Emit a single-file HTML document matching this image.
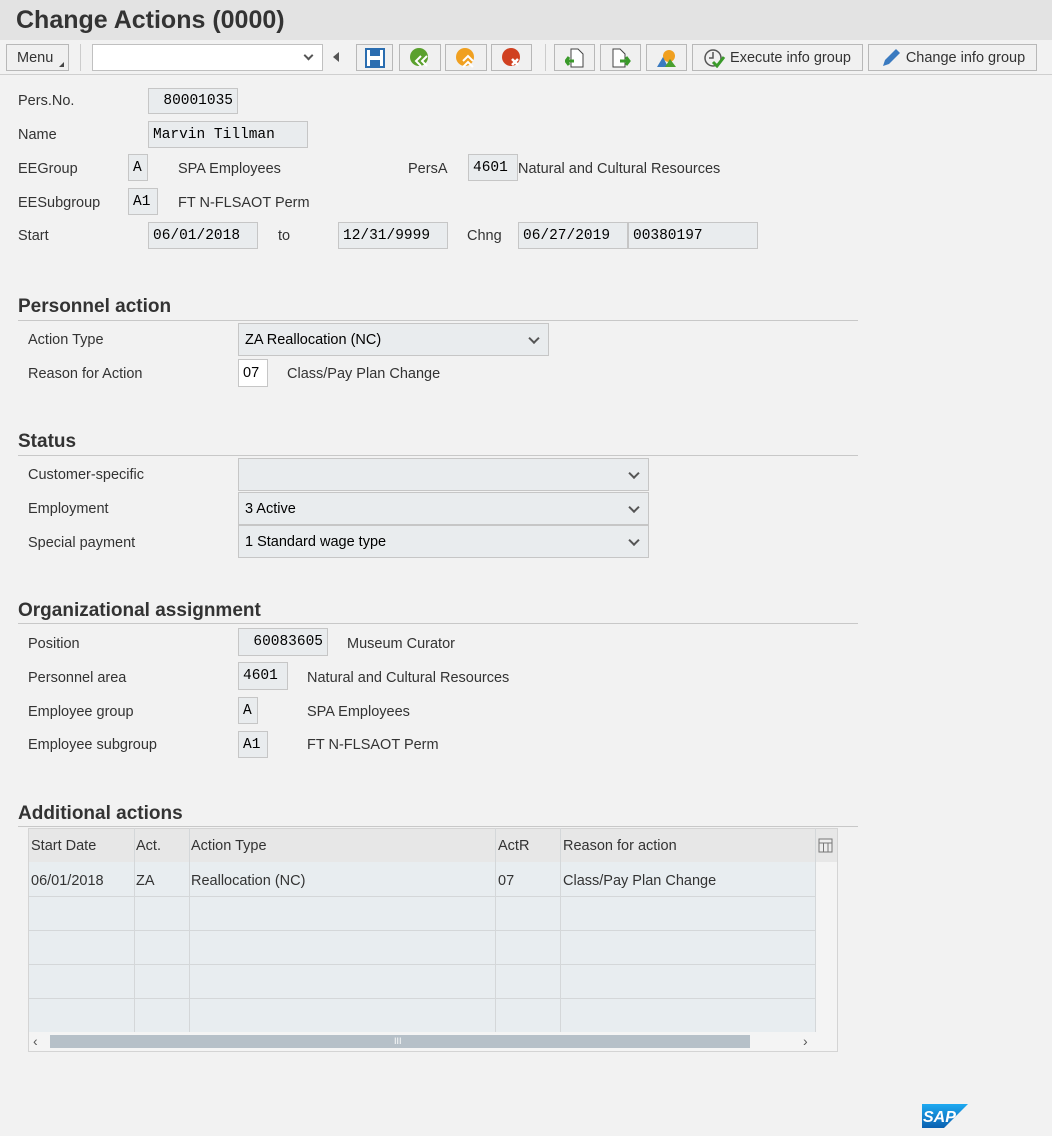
<!DOCTYPE html>
<html><head><meta charset="utf-8"><style>
*{box-sizing:border-box;margin:0;padding:0}
body{width:1052px;height:1136px;background:#f2f2f2;font-family:"Liberation Sans",Arial,sans-serif;color:#333;position:relative;overflow:hidden;font-size:14px}
.a{position:absolute}
.t{position:absolute;white-space:nowrap;font-size:14.5px;color:#333;line-height:16px}
.in{position:absolute;background:#e9ecee;border:1px solid #c6c6c6;font-family:"Liberation Mono",monospace;font-size:14.5px;color:#000;padding:0 4px;height:26px;display:flex;align-items:center;white-space:nowrap}
.dd{position:absolute;background:#e9ecee;border:1px solid #c6c6c6;font-size:14.5px;color:#000;padding:0 6px;white-space:nowrap;display:flex;align-items:center}
.dd:after{content:"";position:absolute;right:10px;top:50%;width:6px;height:6px;border-right:2px solid #555;border-bottom:2px solid #555;transform:translateY(-70%) rotate(45deg)}
.h{position:absolute;font-weight:bold;font-size:19px;color:#333;left:18px}
.ln{position:absolute;left:18px;width:840px;height:1px;background:#c8c8c8}
.btn{position:absolute;top:44px;height:27px;background:#f0f0f0;border:1px solid #b8b8b8;display:flex;align-items:center;justify-content:center;font-size:14.5px;color:#333}
.col{position:absolute;top:828px;height:204px;width:1px;background:#d4d7d9}
.row{position:absolute;left:29px;width:786px;height:1px;background:#d4d7d9}
</style></head><body>
<div class="a" style="left:0;top:0;width:1052px;height:40px;background:#e3e3e3"></div>
<div class="a" style="left:16px;top:6px;font-size:25px;font-weight:bold;color:#333">Change Actions (0000)</div>
<div class="a" style="left:0;top:74px;width:1052px;height:1px;background:#cfcfcf"></div>
<div class="btn" style="left:6px;width:63px;justify-content:flex-start;padding-left:10px">Menu<span style="position:absolute;right:4px;bottom:3px;width:0;height:0;border-left:5px solid transparent;border-bottom:5px solid #444"></span></div>
<div class="a" style="left:80px;top:44px;width:1px;height:27px;background:#ccc"></div>
<div class="a" style="left:92px;top:44px;width:231px;height:27px;background:#fff;border:1px solid #c0c0c0"></div>
<div class="a" style="left:305px;top:52px;width:7px;height:7px;border-right:2px solid #555;border-bottom:2px solid #555;transform:rotate(45deg)"></div>
<div class="a" style="left:333px;top:52px;width:0;height:0;border-top:5px solid transparent;border-bottom:5px solid transparent;border-right:6px solid #555"></div>
<div class="btn" style="left:356px;width:37px"><svg width="20" height="20"><rect x="1" y="1" width="18" height="18" fill="#fff" stroke="#2a6db0" stroke-width="2"/><rect x="5" y="2" width="10" height="6" fill="#2a6db0"/><rect x="5" y="12" width="10" height="6" fill="#2a6db0"/></svg></div>
<div class="btn" style="left:399px;width:42px"><svg width="22" height="22"><circle cx="10" cy="10" r="9" fill="#5aa02c"/><path d="M12 9l-5 5 5 5M18 9l-5 5 5 5" stroke="#fff" stroke-width="2" fill="none"/></svg></div>
<div class="btn" style="left:445px;width:42px"><svg width="22" height="22"><circle cx="10" cy="10" r="9" fill="#f0a020"/><path d="M8 14l5-5 5 5M8 20l5-5 5 5" stroke="#fff" stroke-width="2" fill="none"/></svg></div>
<div class="btn" style="left:491px;width:41px"><svg width="22" height="22"><circle cx="10" cy="10" r="9" fill="#d04020"/><path d="M11 12l6 6M17 12l-6 6" stroke="#fff" stroke-width="2.5"/></svg></div>
<div class="a" style="left:545px;top:44px;width:1px;height:27px;background:#ccc"></div>
<div class="btn" style="left:554px;width:41px"><svg width="20" height="20"><path d="M6 1h7l5 5v13H6z" fill="#fff" stroke="#444"/><path d="M1 13h8M4 9l-3 4 3 4" stroke="#3a9a2a" stroke-width="3" fill="none"/></svg></div>
<div class="btn" style="left:600px;width:41px"><svg width="20" height="20"><path d="M2 1h7l5 5v13H2z" fill="#fff" stroke="#444"/><path d="M9 13h9M15 9l3 4-3 4" stroke="#3a9a2a" stroke-width="3" fill="none"/></svg></div>
<div class="btn" style="left:646px;width:41px"><svg width="22" height="20"><circle cx="13" cy="8" r="6" fill="#f0a020"/><path d="M1 19l6-10 5 10z" fill="#3a7ac0"/><path d="M9 19l5-8 6 8z" fill="#4aa030"/></svg></div>
<div class="btn" style="left:692px;width:171px"><svg width="22" height="20" style="margin-right:4px"><circle cx="9" cy="10" r="8" fill="none" stroke="#555" stroke-width="1.5"/><path d="M9 4v6h-4" stroke="#555" stroke-width="1.5" fill="none"/><path d="M9 14l4 4 7-9" stroke="#3a9a2a" stroke-width="3" fill="none"/></svg>Execute info group</div>
<div class="btn" style="left:868px;width:169px"><svg width="22" height="20" style="margin-right:4px"><path d="M3 18l2-6 11-11 4 4-11 11z" fill="#3a7ac0"/></svg>Change info group</div>

<div class="t" style="left:18px;top:93px">Pers.No.</div><div class="in" style="left:148px;top:88px;width:90px;justify-content:flex-end">80001035</div>
<div class="t" style="left:18px;top:127px">Name</div><div class="in" style="left:148px;top:121px;width:160px;height:27px">Marvin Tillman</div>
<div class="t" style="left:18px;top:161px">EEGroup</div><div class="in" style="left:128px;top:154px;width:20px;height:27px">A</div><div class="t" style="left:178px;top:161px">SPA Employees</div>
<div class="t" style="left:408px;top:161px">PersA</div><div class="in" style="left:468px;top:154px;width:50px;height:27px">4601</div><div class="t" style="left:518px;top:161px">Natural and Cultural Resources</div>
<div class="t" style="left:18px;top:195px">EESubgroup</div><div class="in" style="left:128px;top:188px;width:30px;height:27px">A1</div><div class="t" style="left:178px;top:195px">FT N-FLSAOT Perm</div>
<div class="t" style="left:18px;top:228px">Start</div><div class="in" style="left:148px;top:222px;width:110px;height:27px">06/01/2018</div>
<div class="t" style="left:278px;top:228px">to</div><div class="in" style="left:338px;top:222px;width:110px;height:27px">12/31/9999</div>
<div class="t" style="left:467px;top:228px">Chng</div><div class="in" style="left:518px;top:222px;width:110px;height:27px">06/27/2019</div><div class="in" style="left:628px;top:222px;width:130px;height:27px">00380197</div>

<div class="h" style="top:296px">Personnel action</div><div class="ln" style="top:320px"></div>
<div class="t" style="left:28px;top:332px">Action Type</div><div class="dd" style="left:238px;top:323px;width:311px;height:33px">ZA Reallocation (NC)</div>
<div class="t" style="left:28px;top:366px">Reason for Action</div><div class="in" style="left:238px;top:359px;width:30px;height:28px;background:#fff;font-family:'Liberation Sans',sans-serif">07</div><div class="t" style="left:287px;top:366px">Class/Pay Plan Change</div>

<div class="h" style="top:431px">Status</div><div class="ln" style="top:455px"></div>
<div class="t" style="left:28px;top:467px">Customer-specific</div><div class="dd" style="left:238px;top:458px;width:411px;height:33px"></div>
<div class="t" style="left:28px;top:501px">Employment</div><div class="dd" style="left:238px;top:492px;width:411px;height:33px">3 Active</div>
<div class="t" style="left:28px;top:535px">Special payment</div><div class="dd" style="left:238px;top:525px;width:411px;height:33px">1 Standard wage type</div>

<div class="h" style="top:600px">Organizational assignment</div><div class="ln" style="top:623px"></div>
<div class="t" style="left:28px;top:636px">Position</div><div class="in" style="left:238px;top:628px;width:90px;height:28px;justify-content:flex-end">60083605</div><div class="t" style="left:347px;top:636px">Museum Curator</div>
<div class="t" style="left:28px;top:670px">Personnel area</div><div class="in" style="left:238px;top:662px;width:50px;height:28px">4601</div><div class="t" style="left:307px;top:670px">Natural and Cultural Resources</div>
<div class="t" style="left:28px;top:704px">Employee group</div><div class="in" style="left:238px;top:697px;width:20px;height:27px">A</div><div class="t" style="left:307px;top:704px">SPA Employees</div>
<div class="t" style="left:28px;top:737px">Employee subgroup</div><div class="in" style="left:238px;top:731px;width:30px;height:27px">A1</div><div class="t" style="left:307px;top:737px">FT N-FLSAOT Perm</div>

<div class="h" style="top:803px">Additional actions</div><div class="ln" style="top:826px"></div>
<div class="a" style="left:28px;top:828px;width:810px;height:224px;background:#f4f4f4;border:1px solid #d4d4d4"></div>
<div class="a" style="left:29px;top:829px;width:808px;height:33px;background:#e7e7e7"></div>
<div class="a" style="left:29px;top:862px;width:786px;height:170px;background:#e8edf0"></div>
<div class="row" style="top:896px"></div><div class="row" style="top:930px"></div><div class="row" style="top:964px"></div><div class="row" style="top:998px"></div>
<div class="col" style="left:134px"></div><div class="col" style="left:189px"></div><div class="col" style="left:495px"></div><div class="col" style="left:560px"></div><div class="col" style="left:815px"></div>
<div class="t" style="left:31px;top:838px">Start Date</div><div class="t" style="left:136px;top:838px">Act.</div><div class="t" style="left:191px;top:838px">Action Type</div><div class="t" style="left:498px;top:838px">ActR</div><div class="t" style="left:563px;top:838px">Reason for action</div>
<svg class="a" style="left:818px;top:838px" width="16" height="16"><rect x="1" y="1" width="13" height="13" fill="#eee" stroke="#777"/><path d="M1 5h13M5.5 5v9M10 5v9" stroke="#777"/></svg>
<div class="t" style="left:31px;top:873px">06/01/2018</div><div class="t" style="left:136px;top:873px">ZA</div><div class="t" style="left:191px;top:873px">Reallocation (NC)</div><div class="t" style="left:498px;top:873px">07</div><div class="t" style="left:563px;top:873px">Class/Pay Plan Change</div>
<div class="a" style="left:50px;top:1035px;width:700px;height:13px;background:#b6c0c8"></div>
<div class="a" style="left:394px;top:1036px;color:#fff;font-size:9px">III</div>
<div class="a" style="left:33px;top:1033px;font-size:14px;color:#555">‹</div>
<div class="a" style="left:803px;top:1033px;font-size:14px;color:#555">›</div>
<svg class="a" style="left:922px;top:1104px" width="46" height="24"><defs><linearGradient id="g" x1="0" y1="0" x2="0" y2="1"><stop offset="0" stop-color="#1eaaf1"/><stop offset="1" stop-color="#0a60b0"/></linearGradient></defs><path d="M0 0h46L22 24H0z" fill="url(#g)"/><text x="1" y="18" font-family="Liberation Sans" font-weight="bold" font-size="16" fill="#fff" font-style="italic">SAP</text></svg>
</body></html>
